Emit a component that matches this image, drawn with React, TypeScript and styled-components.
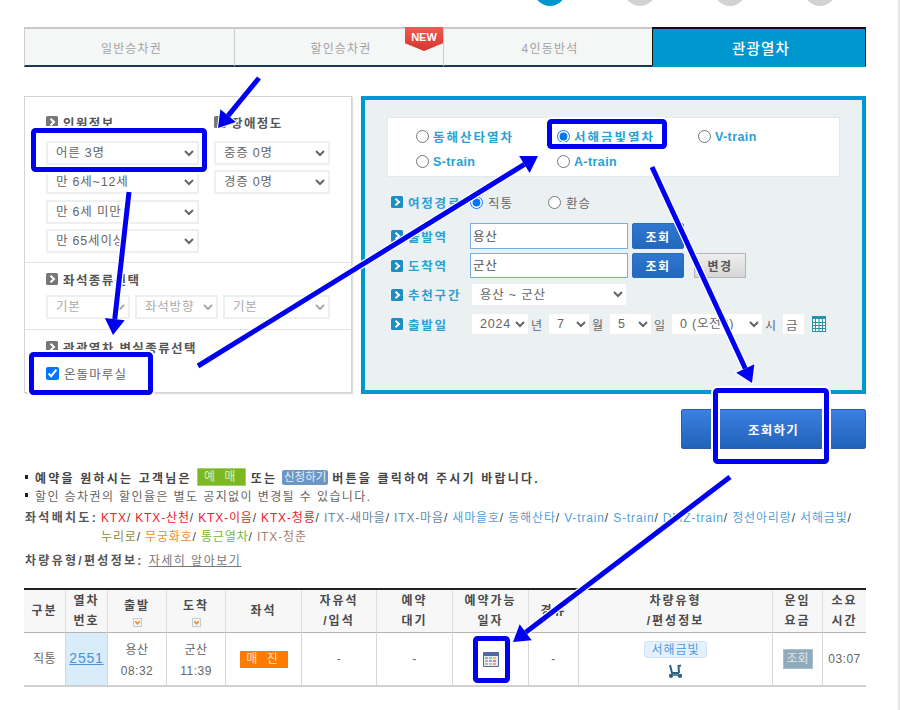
import React from "react";
import styled, { createGlobalStyle } from "styled-components";

const Global = createGlobalStyle`
  html, body { margin: 0; padding: 0; background: #fff; }
  body { font-family: "Liberation Sans", "Noto Sans CJK KR", sans-serif; font-size: 12px; color: #555; }
  * { box-sizing: border-box; }
  select, input { font-family: inherit; }
`;

const Page = styled.div`
  position: relative;
  width: 900px;
  height: 710px;
  overflow: hidden;
  padding: 0 32px 0 24px;
  border-right: 2px solid #e6e6e6;
`;

const Steps = styled.div`
  display: flex;
  height: 6px;
  overflow: hidden;
  padding-left: 510px;
`;
const Step = styled.div`
  display: flex;
  align-items: flex-end;
  width: 90px;
  flex: none;
  gap: 10px;
`;
const StepDot = styled.span<{ $on?: boolean }>`
  width: 32px;
  height: 32px;
  flex: none;
  border-radius: 50%;
  background: ${(p) => (p.$on ? "#0097cf" : "#d2d2d2")};
`;
const StepText = styled.span`
  font-size: 11px;
  line-height: 11px;
  color: #aaa;
  transform: translateY(-5px);
`;

const Tabs = styled.div`
  display: grid;
  grid-template-columns: 210px 209px 209px 214px;
  height: 40px;
  margin-top: 21px;
`;
const Tab = styled.div<{ $on?: boolean }>`
  position: relative;
  display: flex;
  align-items: center;
  justify-content: center;
  padding-left: 4px;
  font-size: ${(p) => (p.$on ? "14.5px" : "12px")};
  font-weight: ${(p) => (p.$on ? 500 : 400)};
  letter-spacing: 1.2px;
  color: ${(p) => (p.$on ? "#fff" : "#a3a3a3")};
  background: ${(p) => (p.$on ? "#0097cf" : "#f5f6f6")};
  border-top: 2px solid ${(p) => (p.$on ? "#111" : "#c8c8c8")};
  border-bottom: 2px solid ${(p) => (p.$on ? "#0097cf" : "#1b3a57")};
  border-left: ${(p) => (p.$on ? "1.5px solid #111" : "1px solid #ccc")};
  border-right: ${(p) => (p.$on ? "1px solid #111" : "none")};
`;
const NewBadge = styled.span`
  position: absolute;
  top: -2px;
  right: 0;
  width: 38px;
  height: 24px;
  padding-top: 4px;
  font-size: 11px;
  line-height: 13px;
  font-weight: 700;
  letter-spacing: 0;
  text-align: center;
  color: #fff;
  background: linear-gradient(#f05a52, #d8342e);
  clip-path: polygon(0 0, 100% 0, 100% 68%, 50% 100%, 0 68%);
`;

const Main = styled.div`
  display: flex;
  justify-content: space-between;
  margin-top: 29px;
`;
const LeftPanel = styled.div`
  width: 328px;
  height: 297px;
  border: 1px solid #d4d4d4;
  box-shadow: 1px 1px 1px #ddd;
`;
const Section = styled.div<{ $top: number; $height: number; $rule?: boolean }>`
  height: ${(p) => p.$height}px;
  padding: ${(p) => p.$top}px 21px 0 21px;
  border-top: ${(p) => (p.$rule ? "1px solid #e2e2e2" : "none")};
`;
const Heading = styled.div`
  display: flex;
  align-items: center;
  gap: 5px;
  height: 16px;
  font-size: 12.5px;
  font-weight: 700;
  letter-spacing: 1.4px;
  color: #555;
  white-space: nowrap;
`;
const HeadingIcon = styled.svg`
  width: 12px;
  height: 12px;
  flex: none;
`;
const PeopleGrid = styled.div`
  display: grid;
  grid-template-columns: 153px 116px;
  column-gap: 15px;
`;
const PeopleColumn = styled.div`
  display: flex;
  flex-direction: column;
  gap: 5.3px;
  margin-top: 11px;
`;
const Select = styled.select<{ $w?: number; $h?: number }>`
  width: ${(p) => (p.$w ? `${p.$w}px` : "100%")};
  height: ${(p) => p.$h ?? 24}px;
  flex: none;
  padding: 0 0 0 4px;
  font-size: 12.5px;
  letter-spacing: 0.8px;
  color: #666;
  background-color: #fff;
  border: 2px solid #eef0f0;
  border-radius: 0;
  &:disabled { color: #aaa; opacity: 1; background-color: #fff; }
`;
const SeatRow = styled.div`
  display: flex;
  justify-content: space-between;
  margin-top: 8px;
`;
const CheckRow = styled.label`
  display: flex;
  align-items: center;
  gap: 5px;
  margin-top: 9px;
  font-size: 12.5px;
  letter-spacing: 1.1px;
  color: #666;
  input { width: 13px; height: 13px; margin: 0; }
`;

const RightPanel = styled.div`
  width: 505px;
  height: 298px;
  padding: 17px 22px 0;
  background: #ebf0f3;
  border: 4px solid #0097cf;
`;
const TrainBox = styled.div`
  display: grid;
  grid-template-columns: repeat(3, 141px);
  grid-auto-rows: 25px;
  align-content: center;
  height: 60px;
  padding: 4px 0 0 28px;
  background: #fff;
  border: 1px solid #e4e8ea;
`;
const TrainOption = styled.label<{ $latin?: boolean }>`
  display: flex;
  align-items: center;
  gap: 4px;
  font-size: 12.5px;
  font-weight: 700;
  letter-spacing: ${(p) => (p.$latin ? "0.4px" : "2px")};
  color: #2aa0d4;
  white-space: nowrap;
  input { width: 13px; height: 13px; margin: 0; }
`;
const Form = styled.div`
  display: flex;
  flex-direction: column;
  margin: 13px 0 0 4px;
`;
const FormRow = styled.div<{ $h: number; $gap: number }>`
  display: flex;
  align-items: center;
  height: ${(p) => p.$h}px;
  margin-bottom: ${(p) => p.$gap}px;
`;
const FormLabel = styled.div`
  display: flex;
  align-items: center;
  gap: 5px;
  width: 79px;
  flex: none;
  font-size: 12.5px;
  font-weight: 700;
  letter-spacing: 1.8px;
  color: #2aa0d4;
  white-space: nowrap;
`;
const RouteOption = styled.label<{ $w: number }>`
  display: flex;
  align-items: center;
  gap: 5px;
  width: ${(p) => p.$w}px;
  font-size: 12.5px;
  letter-spacing: 1px;
  color: #666;
  input { width: 13px; height: 13px; margin: 0; }
`;
const StationInput = styled.input`
  width: 158px;
  height: 100%;
  padding: 0 2px 2px;
  font-size: 12.5px;
  letter-spacing: 0.8px;
  color: #555;
  background: #fff;
  border: 1px solid #7aaee0;
`;
const BlueButton = styled.button`
  width: 52px;
  height: 100%;
  margin-left: 4px;
  padding: 0;
  font-family: inherit;
  font-size: 12px;
  font-weight: 700;
  letter-spacing: 1.5px;
  color: #fff;
  background: linear-gradient(#2f77d0, #2268bc);
  border: 1px solid #2a6ab8;
  border-radius: 2px;
`;
const GreyButton = styled.button`
  width: 52px;
  height: 100%;
  margin-left: 10px;
  padding: 0;
  font-family: inherit;
  font-size: 12px;
  font-weight: 700;
  letter-spacing: 1.5px;
  color: #555;
  background: linear-gradient(#eeeeee, #d6d6d6);
  border: 1px solid #b4b4b4;
`;
const Unit = styled.span`
  width: 17px;
  flex: none;
  padding-left: 1px;
  font-size: 12px;
  color: #666;
`;
const HourInput = styled.input`
  width: 25px;
  height: 100%;
  padding: 0 0 0 3px;
  font-size: 12.5px;
  color: #666;
  background: #fff;
  border: 2px solid #eef0f0;
`;
const GridIcon = styled.svg`
  width: 14px;
  height: 16px;
  margin-left: 6px;
  flex: none;
`;

const SubmitRow = styled.div`
  display: flex;
  justify-content: flex-end;
  margin-top: 15px;
`;
const SubmitButton = styled.button`
  width: 185px;
  height: 40px;
  padding: 0;
  font-family: inherit;
  font-size: 12.5px;
  font-weight: 700;
  letter-spacing: 1.2px;
  color: #fff;
  background: linear-gradient(#3b80e2, #2263b9);
  border: 1px solid #2a5fa8;
  border-radius: 2px;
`;

const Notes = styled.ul`
  margin: 19px 0 0;
  padding: 0;
  list-style: none;
`;
const Note = styled.li<{ $strong?: boolean }>`
  position: relative;
  display: flex;
  align-items: center;
  height: 18px;
  padding-left: 11px;
  font-size: 12px;
  font-weight: ${(p) => (p.$strong ? 700 : 400)};
  letter-spacing: ${(p) => (p.$strong ? "2.2px" : "1.4px")};
  color: ${(p) => (p.$strong ? "#444" : "#666")};
  white-space: pre;
  &::before {
    content: "";
    position: absolute;
    left: 1px;
    top: 7px;
    width: 3px;
    height: 4px;
    background: #222;
  }
`;
const GreenTag = styled.span`
  display: inline-block;
  width: 49px;
  height: 18px;
  margin: 0 5px;
  font-size: 12px;
  font-weight: 400;
  line-height: 17px;
  letter-spacing: 3px;
  text-align: center;
  color: #dfeebe;
  background: #7cb822;
  border: 1px solid #a8d070;
`;
const BlueTag = styled.span`
  display: inline-block;
  width: 46px;
  height: 15px;
  margin: 0 4px 0 5px;
  font-size: 11.5px;
  font-weight: 400;
  line-height: 14px;
  letter-spacing: 0;
  text-align: center;
  color: #e3eef8;
  background: #6c97c5;
  border-radius: 2px;
`;

const SeatInfo = styled.div`
  display: grid;
  grid-template-columns: 76px 1fr;
  margin-top: 5px;
  padding-left: 1px;
`;
const InfoLabel = styled.div`
  font-size: 12px;
  font-weight: 700;
  line-height: 19px;
  letter-spacing: 2.3px;
  color: #555;
  white-space: nowrap;
`;
const InfoLine = styled.div`
  height: 19px;
  font-size: 12px;
  line-height: 19px;
  letter-spacing: 0.85px;
  white-space: nowrap;
  color: #444;
`;
const TrainLink = styled.span<{ $c: string }>`
  color: ${(p) => p.$c};
`;
const VehicleRow = styled.div`
  display: flex;
  gap: 5px;
  margin-top: 5px;
  padding-left: 1px;
`;
const DetailLink = styled.a`
  font-size: 12px;
  line-height: 19px;
  letter-spacing: 1.5px;
  color: #777;
  text-decoration: underline;
`;

const Table = styled.table`
  width: 842px;
  margin-top: 17px;
  table-layout: fixed;
  border-collapse: separate;
  border-spacing: 0;
  border-top: 2px solid #222;
`;
const Th = styled.th`
  height: 43px;
  padding: 0;
  font-size: 12px;
  font-weight: 700;
  line-height: 20px;
  letter-spacing: 2px;
  color: #4a4a4a;
  background: #f7f7f7;
  border-right: 1px solid #dedede;
  border-bottom: 1px solid #b4b4b4;
  &:last-child { border-right: none; }
`;
const Td = styled.td<{ $hl?: boolean }>`
  height: 54px;
  padding: 0;
  font-size: 12px;
  line-height: 21px;
  letter-spacing: 0.5px;
  text-align: center;
  color: #666;
  background: ${(p) => (p.$hl ? "#d8ecfa" : "#fff")};
  border-right: 1px solid #d6d6d6;
  border-bottom: 2px solid #d0d0d0;
  &:last-child { border-right: none; }
`;
const StopText = styled.span`
  display: block;
  padding-top: 3px;
`;
const SortIcon = styled.svg`
  display: block;
  width: 9px;
  height: 9px;
  margin: 2px auto 0;
`;
const TrainNo = styled.a`
  font-size: 14px;
  letter-spacing: 0.8px;
  color: #4f92d8;
  text-decoration: underline;
`;
const SoldOut = styled.span`
  display: inline-block;
  width: 48px;
  height: 17px;
  font-size: 12px;
  line-height: 17px;
  letter-spacing: 3px;
  color: #ffe4c4;
  background: #ff7a00;
`;
const CalendarIcon = styled.svg`
  display: block;
  width: 16px;
  height: 15px;
  margin: 0 auto;
`;
const TrainTag = styled.span`
  display: block;
  width: 63px;
  height: 17px;
  margin: 0 auto 6px;
  font-size: 12px;
  line-height: 16px;
  letter-spacing: 1px;
  color: #4f9ada;
  background: #e4f1fc;
  border: 1px solid #cfe4f8;
  border-radius: 3px;
`;
const ScooterIcon = styled.svg`
  display: block;
  width: 15px;
  height: 14px;
  margin: 0 auto;
`;
const QueryTag = styled.span`
  display: inline-block;
  width: 30px;
  height: 20px;
  font-size: 12px;
  line-height: 19px;
  letter-spacing: 0;
  color: #dfe8ec;
  background: #8fabbb;
  border: 1px solid #a9c0cc;
`;
const Overlay = styled.svg`
  position: absolute;
  left: 0;
  top: 0;
  width: 900px;
  height: 710px;
  pointer-events: none;
`;

const Col = styled.col<{ $w: number }>`
  width: ${(p) => p.$w}px;
`;

const Bullet = ({ c }: { c: string }) => (
  <HeadingIcon viewBox="0 0 12 12">
    <rect width="12" height="12" rx="1.5" fill={c} />
    <path d="M4.5 2.8 L8 6 L4.5 9.2" fill="none" stroke="#fff" strokeWidth="2" />
  </HeadingIcon>
);

const Sort = () => (
  <SortIcon viewBox="0 0 9 9">
    <rect x="0.5" y="0.5" width="8" height="8" fill="#f4f4f4" stroke="#c4cdd4" />
    <path d="M2.3 3.2 L4.5 5.8 L6.7 3.2" fill="none" stroke="#f58a1f" strokeWidth="1.6" />
  </SortIcon>
);

type Pt = [number, number];
const Arrow = ({ from, to }: { from: Pt; to: Pt }) => {
  const dx = to[0] - from[0];
  const dy = to[1] - from[1];
  const len = Math.hypot(dx, dy);
  const ux = dx / len;
  const uy = dy / len;
  const bx = to[0] - ux * 16;
  const by = to[1] - uy * 16;
  const head = `${to[0]},${to[1]} ${bx - uy * 10},${by + ux * 10} ${bx + uy * 10},${by - ux * 10}`;
  return (
    <g>
      <line x1={from[0]} y1={from[1]} x2={bx} y2={by} stroke="#fff" strokeWidth="7.5" />
      <polygon points={head} fill="#0000f0" stroke="#fff" strokeWidth="2" />
      <line x1={from[0]} y1={from[1]} x2={bx} y2={by} stroke="#0000f0" strokeWidth="5" />
      <polygon points={head} fill="#0000f0" />
    </g>
  );
};

const Mark = ({ x, y, w, h }: { x: number; y: number; w: number; h: number }) => (
  <g fill="none">
    <rect x={x + 2.5} y={y + 2.5} width={w - 5} height={h - 5} rx="2" stroke="#fff" strokeWidth="9" />
    <rect x={x + 2.5} y={y + 2.5} width={w - 5} height={h - 5} rx="2" stroke="#0000f0" strokeWidth="5" />
  </g>
);

const blue = "#4f9fe0";
const red = "#e8212e";
const slate = "#6a87a3";
const line1: [string, string][] = [
  ["KTX", red], ["KTX-산천", red], ["KTX-이음", red], ["KTX-청룡", red],
  ["ITX-새마을", slate], ["ITX-마음", slate], ["새마을호", blue], ["동해산타", blue],
  ["V-train", blue], ["S-train", blue], ["DMZ-train", blue], ["정선아리랑", blue], ["서해금빛", blue],
];
const line2: [string, string][] = [
  ["누리로", "#8f8f35"], ["무궁화호", "#f58a1f"], ["통근열차", "#74b840"], ["ITX-청춘", "#a5806f"],
];

const Links = ({ items }: { items: [string, string][] }) => (
  <InfoLine>
    {items.map(([t, c], i) => (
      <React.Fragment key={t}>
        <TrainLink $c={c}>{t}</TrainLink>
        {i < items.length - 1 || items === line1 ? "/ " : ""}
      </React.Fragment>
    ))}
  </InfoLine>
);

const widths = [42, 42, 59, 59, 76, 75, 76, 76, 50, 194, 50, 43];

export default function App() {
  return (
    <Page>
      <Global />
      <Steps>
        {["조회", "정보", "결제", "완료"].map((t, i) => (
          <Step key={t}>
            <StepDot $on={i === 0} />
            <StepText>{t}</StepText>
          </Step>
        ))}
      </Steps>

      <Tabs>
        <Tab>일반승차권</Tab>
        <Tab>
          할인승차권
          <NewBadge>NEW</NewBadge>
        </Tab>
        <Tab>4인동반석</Tab>
        <Tab $on>관광열차</Tab>
      </Tabs>

      <Main>
        <LeftPanel>
          <Section $top={17} $height={165}>
            <PeopleGrid>
              <div>
                <Heading><Bullet c="#777" />인원정보</Heading>
                <PeopleColumn>
                  <Select defaultValue="a"><option value="a">어른 3명</option></Select>
                  <Select><option>만 6세~12세</option></Select>
                  <Select><option>만 6세 미만</option></Select>
                  <Select><option>만 65세이상</option></Select>
                </PeopleColumn>
              </div>
              <div>
                <Heading><Bullet c="#777" />장애정도</Heading>
                <PeopleColumn>
                  <Select><option>중증 0명</option></Select>
                  <Select><option>경증 0명</option></Select>
                </PeopleColumn>
              </div>
            </PeopleGrid>
          </Section>
          <Section $rule $top={8} $height={67}>
            <Heading><Bullet c="#777" />좌석종류선택</Heading>
            <SeatRow>
              <Select disabled $w={84}><option>기본</option></Select>
              <Select disabled $w={83}><option>좌석방향</option></Select>
              <Select disabled $w={107}><option>기본</option></Select>
            </SeatRow>
          </Section>
          <Section $rule $top={9} $height={63}>
            <Heading><Bullet c="#777" />관광열차 변실종류선택</Heading>
            <CheckRow><input type="checkbox" defaultChecked />온돌마루실</CheckRow>
          </Section>
        </LeftPanel>

        <RightPanel>
          <TrainBox>
            <TrainOption><input type="radio" name="train" />동해산타열차</TrainOption>
            <TrainOption><input type="radio" name="train" defaultChecked />서해금빛열차</TrainOption>
            <TrainOption $latin><input type="radio" name="train" />V-train</TrainOption>
            <TrainOption $latin><input type="radio" name="train" />S-train</TrainOption>
            <TrainOption $latin><input type="radio" name="train" />A-train</TrainOption>
          </TrainBox>
          <Form>
            <FormRow $h={24} $gap={9}>
              <FormLabel><Bullet c="#1a8fc4" />여정경로</FormLabel>
              <RouteOption $w={78}><input type="radio" name="route" defaultChecked />직통</RouteOption>
              <RouteOption $w={60}><input type="radio" name="route" />환승</RouteOption>
            </FormRow>
            <FormRow $h={26} $gap={4}>
              <FormLabel><Bullet c="#1a8fc4" />출발역</FormLabel>
              <StationInput defaultValue="용산" />
              <BlueButton>조회</BlueButton>
            </FormRow>
            <FormRow $h={25} $gap={4}>
              <FormLabel><Bullet c="#1a8fc4" />도착역</FormLabel>
              <StationInput defaultValue="군산" />
              <BlueButton>조회</BlueButton>
              <GreyButton>변경</GreyButton>
            </FormRow>
            <FormRow $h={25} $gap={5}>
              <FormLabel><Bullet c="#1a8fc4" />추천구간</FormLabel>
              <Select $w={158} $h={25}><option>용산 ~ 군산</option></Select>
            </FormRow>
            <FormRow $h={24} $gap={0}>
              <FormLabel><Bullet c="#1a8fc4" />출발일</FormLabel>
              <Select $w={60}><option>2024</option></Select>
              <Unit>년</Unit>
              <Select $w={44}><option>7</option></Select>
              <Unit>월</Unit>
              <Select $w={45}><option>5</option></Select>
              <Unit>일</Unit>
              <Select $w={94}><option>0 (오전0)</option></Select>
              <Unit>시</Unit>
              <HourInput defaultValue="금" />
              <GridIcon viewBox="0 0 14 16">
                <rect x="0.5" y="0.5" width="13" height="15" fill="#fff" stroke="#2b8fa8" />
                <rect x="0" y="0" width="14" height="3" fill="#2b8fa8" />
                <path d="M0 6.5H14M0 9.5H14M0 12.5H14M3.5 3V16M7 3V16M10.5 3V16" stroke="#2b8fa8" strokeWidth="1" />
              </GridIcon>
            </FormRow>
          </Form>
        </RightPanel>
      </Main>

      <SubmitRow>
        <SubmitButton>조회하기</SubmitButton>
      </SubmitRow>

      <Notes>
        <Note $strong>예약을 원하시는 고객님은<GreenTag>예 매</GreenTag>또는<BlueTag>신청하기</BlueTag>버튼을 클릭하여 주시기 바랍니다.</Note>
        <Note>할인 승차권의 할인율은 별도 공지없이 변경될 수 있습니다.</Note>
      </Notes>

      <SeatInfo>
        <InfoLabel>좌석배치도:</InfoLabel>
        <div>
          <Links items={line1} />
          <Links items={line2} />
        </div>
      </SeatInfo>

      <VehicleRow>
        <InfoLabel>차량유형/편성정보:</InfoLabel>
        <DetailLink>자세히 알아보기</DetailLink>
      </VehicleRow>

      <Table>
        <colgroup>
          {widths.map((w, i) => <Col key={i} $w={w} />)}
        </colgroup>
        <thead>
          <tr>
            <Th>구분</Th>
            <Th>열차<br />번호</Th>
            <Th>출발<Sort /></Th>
            <Th>도착<Sort /></Th>
            <Th>좌석</Th>
            <Th>자유석<br />/입석</Th>
            <Th>예약<br />대기</Th>
            <Th>예약가능<br />일자</Th>
            <Th>경유</Th>
            <Th>차량유형<br />/편성정보</Th>
            <Th>운임<br />요금</Th>
            <Th>소요<br />시간</Th>
          </tr>
        </thead>
        <tbody>
          <tr>
            <Td>직통</Td>
            <Td $hl><TrainNo>2551</TrainNo></Td>
            <Td><StopText>용산<br />08:32</StopText></Td>
            <Td><StopText>군산<br />11:39</StopText></Td>
            <Td><SoldOut>매 진</SoldOut></Td>
            <Td>-</Td>
            <Td>-</Td>
            <Td>
              <CalendarIcon viewBox="0 0 16 15">
                <rect width="16" height="15" rx="1" fill="#4e6a9e" />
                <rect x="1" y="4" width="14" height="10" fill="#e6ebf4" />
                <rect x="2" y="5" width="3" height="2" fill="#7fb0e8" />
                <rect x="6" y="5" width="3" height="2" fill="#8fd0a0" />
                <rect x="10" y="5" width="3" height="2" fill="#f0c060" />
                <rect x="2" y="8" width="3" height="2" fill="#f0a070" />
                <rect x="6" y="8" width="3" height="2" fill="#7fb0e8" />
                <rect x="10" y="8" width="3" height="2" fill="#e88080" />
                <rect x="2" y="11" width="3" height="2" fill="#8fd0a0" />
                <rect x="6" y="11" width="3" height="2" fill="#f0c060" />
                <rect x="10" y="11" width="3" height="2" fill="#f0a070" />
              </CalendarIcon>
            </Td>
            <Td>-</Td>
            <Td>
              <TrainTag>서해금빛</TrainTag>
              <ScooterIcon viewBox="0 0 15 14">
                <path d="M2 1 L4 9 L11 9 M11 9 L10.5 2 L13 1.5" fill="none" stroke="#2f5f7f" strokeWidth="2" />
                <path d="M1 11 L14 11" stroke="#5a8aa8" strokeWidth="2" />
                <circle cx="3" cy="12" r="2" fill="#2f5f7f" />
                <circle cx="12" cy="12" r="2" fill="#2f5f7f" />
              </ScooterIcon>
            </Td>
            <Td><QueryTag>조회</QueryTag></Td>
            <Td>03:07</Td>
          </tr>
        </tbody>
      </Table>

      <Overlay viewBox="0 0 900 710">
        <Mark x={31} y={128} w={176} h={44} />
        <Mark x={29} y={352} w={124} h={43} />
        <Mark x={547} y={119} w={120} h={30} />
        <Mark x={713} y={388} w={116} h={76} />
        <Mark x={473} y={636} w={37} h={47} />
        <Arrow from={[259, 78]} to={[218, 128]} />
        <Arrow from={[129, 192]} to={[113, 335]} />
        <Arrow from={[198, 366]} to={[538, 156]} />
        <Arrow from={[652, 167]} to={[752, 383]} />
        <Arrow from={[730, 477]} to={[513, 642]} />
      </Overlay>
    </Page>
  );
}
